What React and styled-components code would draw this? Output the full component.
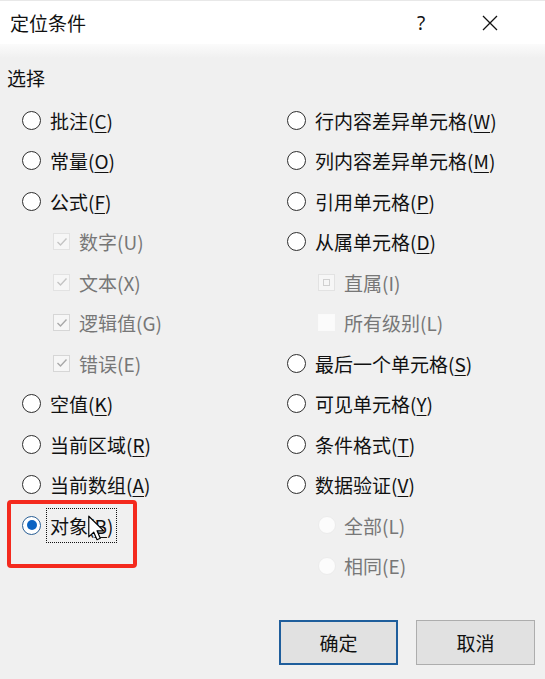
import React from 'react';
import styled, { createGlobalStyle } from 'styled-components';

const GlobalStyle = createGlobalStyle`
  html, body {
    margin: 0;
    padding: 0;
    background: #f0f0f0;
  }
  body {
    font-family: "Noto Sans CJK SC", "Noto Sans", sans-serif;
    color: #111;
  }
`;

const leftItems = [
  { text: '批注', key: 'C' },
  { text: '常量', key: 'O' },
  { text: '公式', key: 'F' },
  { text: '数字', key: 'U', sub: 'check', faint: true },
  { text: '文本', key: 'X', sub: 'check', faint: true },
  { text: '逻辑值', key: 'G', sub: 'check' },
  { text: '错误', key: 'E', sub: 'check' },
  { text: '空值', key: 'K' },
  { text: '当前区域', key: 'R' },
  { text: '当前数组', key: 'A' },
  { text: '对象', key: 'B', checked: true, focus: true },
];

const rightItems = [
  { text: '行内容差异单元格', key: 'W' },
  { text: '列内容差异单元格', key: 'M' },
  { text: '引用单元格', key: 'P' },
  { text: '从属单元格', key: 'D' },
  { text: '直属', key: 'I', sub: 'box' },
  { text: '所有级别', key: 'L', sub: 'blank' },
  { text: '最后一个单元格', key: 'S' },
  { text: '可见单元格', key: 'Y' },
  { text: '条件格式', key: 'T' },
  { text: '数据验证', key: 'V' },
  { text: '全部', key: 'L', sub: 'radio' },
  { text: '相同', key: 'E', sub: 'radio' },
];

function App() {
  return (
    <>
      <GlobalStyle />
      <Dialog>
        <TitleBar>
          <Title>定位条件</Title>
          <HelpButton>?</HelpButton>
          <CloseButton>
            <svg width="16" height="16" viewBox="0 0 16 16">
              <path d="M1 1 L15 15 M15 1 L1 15" stroke="#111" strokeWidth="1.3" fill="none" />
            </svg>
          </CloseButton>
        </TitleBar>

        <Body>
          <GroupLabel>选择</GroupLabel>
          <Columns>
            <Column>
              {leftItems.map((item, i) => <Option key={i} item={item} />)}
            </Column>
            <Column>
              {rightItems.map((item, i) => <Option key={i} item={item} />)}
            </Column>
          </Columns>

          <ButtonBar>
            <DialogButton $primary>确定</DialogButton>
            <DialogButton>取消</DialogButton>
          </ButtonBar>
        </Body>
      </Dialog>
    </>
  );
}

function Option({ item }) {
  const disabled = !!item.sub;
  return (
    <Row $indent={item.sub ? 31 : 0}>
      {!item.sub && <Radio $checked={item.checked} />}
      {item.sub === 'check' && (
        <SubBox $faint={item.faint}>
          <svg width="12" height="10" viewBox="0 0 12 10">
            <path d="M1.5 5 L4.5 8 L10.5 1.5" stroke={item.faint ? '#c4c4c4' : '#a8a8a8'} strokeWidth="1.4" fill="none" />
          </svg>
        </SubBox>
      )}
      {item.sub === 'box' && (
        <SubBox $faint>
          <InnerMark />
        </SubBox>
      )}
      {item.sub === 'blank' && <SubBox $blank />}
      {item.sub === 'radio' && <SubRadio />}
      <Label $disabled={disabled} $focus={item.focus}>
        {item.text}(
        {disabled ? item.key : <u>{item.key}</u>})
      </Label>
      {item.focus && (
        <>
          <Highlight />
          <Cursor width="17" height="27" viewBox="0 0 13 20">
            <path d="M0.6 0.6 V16.4 L4.4 12.8 L6.9 18.6 L9.4 17.5 L6.9 11.8 H12 Z" fill="#fff" stroke="#000" strokeWidth="0.9" strokeLinejoin="round" />
          </Cursor>
        </>
      )}
    </Row>
  );
}

const Dialog = styled.div`
  width: 545px;
  height: 679px;
  display: flex;
  flex-direction: column;
  background: #f0f0f0;
  overflow: hidden;
`;

const TitleBar = styled.div`
  height: 44px;
  flex-shrink: 0;
  display: flex;
  align-items: center;
  padding: 0 32px 0 10px;
  background: #fff;
  border-top: 1px solid #e8e8e8;
  box-sizing: border-box;
`;

const Title = styled.div`
  flex: 1;
  font-size: 19px;
  color: #111;
`;

const HelpButton = styled.div`
  width: 46px;
  text-align: center;
  font-size: 19px;
  font-family: "Noto Sans", sans-serif;
  color: #111;
`;

const CloseButton = styled.div`
  width: 46px;
  margin-left: 23px;
  display: flex;
  justify-content: center;
  align-items: center;
`;

const Body = styled.div`
  flex: 1;
  display: flex;
  flex-direction: column;
  padding: 22px 0 14px;
  background: linear-gradient(#fbfbfb 0, #f0f0f0 14px);
`;

const GroupLabel = styled.div`
  font-size: 19px;
  line-height: 24px;
  padding-left: 7px;
  color: #111;
`;

const Columns = styled.div`
  display: grid;
  grid-template-columns: 265px 1fr;
  padding-left: 22px;
  margin-top: 10px;
`;

const Column = styled.div`
  display: flex;
  flex-direction: column;
`;

const Row = styled.div`
  position: relative;
  height: 40.5px;
  display: flex;
  align-items: center;
  padding-left: ${p => p.$indent}px;
`;

const Radio = styled.span`
  width: 19px;
  height: 19px;
  box-sizing: border-box;
  border-radius: 50%;
  border: 1.5px solid ${p => (p.$checked ? '#2a5f95' : '#2e2e2e')};
  background: #fff;
  margin-right: 9px;
  flex-shrink: 0;
  display: flex;
  align-items: center;
  justify-content: center;
  &::after {
    content: '';
    display: ${p => (p.$checked ? 'block' : 'none')};
    width: 10px;
    height: 10px;
    border-radius: 50%;
    background: #0b63c2;
  }
`;

const SubBox = styled.span`
  width: 17px;
  height: 17px;
  box-sizing: border-box;
  border: 1px solid ${p => (p.$blank ? '#fafafa' : p.$faint ? '#e2e2e2' : '#d6d6d6')};
  background: ${p => (p.$blank ? '#fbfbfb' : '#f6f6f6')};
  margin-right: 9px;
  flex-shrink: 0;
  display: flex;
  align-items: center;
  justify-content: center;
`;

const InnerMark = styled.span`
  width: 7px;
  height: 7px;
  border: 1px solid #d0d0d0;
  box-sizing: border-box;
`;

const SubRadio = styled.span`
  width: 18px;
  height: 18px;
  box-sizing: border-box;
  border-radius: 50%;
  border: 1px solid #ececec;
  background: #fcfcfc;
  margin-right: 8px;
  flex-shrink: 0;
`;

const Label = styled.span`
  font-size: 19px;
  line-height: 33px;
  white-space: nowrap;
  color: ${p => (p.$disabled ? '#777' : '#111')};
  padding: 0 ${p => (p.$focus ? '3px' : '0')};
  margin-left: ${p => (p.$focus ? '-3px' : '0')};
  outline: ${p => (p.$focus ? '1px dotted #111' : 'none')};
  u {
    text-underline-offset: 3px;
  }
`;

const Highlight = styled.div`
  position: absolute;
  left: -15px;
  top: -5px;
  width: 130px;
  height: 68px;
  box-sizing: border-box;
  border: 4px solid #f42a1e;
  border-radius: 4px;
  pointer-events: none;
`;

const Cursor = styled.svg`
  position: absolute;
  left: 66px;
  top: 10px;
`;

const ButtonBar = styled.div`
  margin-top: auto;
  display: flex;
  justify-content: flex-end;
  gap: 18px;
  padding-right: 10px;
`;

const DialogButton = styled.div`
  width: 119px;
  height: 45px;
  box-sizing: border-box;
  display: flex;
  align-items: center;
  justify-content: center;
  font-size: 19px;
  color: #111;
  background: #e1e1e1;
  border: ${p => (p.$primary ? '2px solid #1f5e9c' : '1px solid #adadad')};
`;

export default App;
